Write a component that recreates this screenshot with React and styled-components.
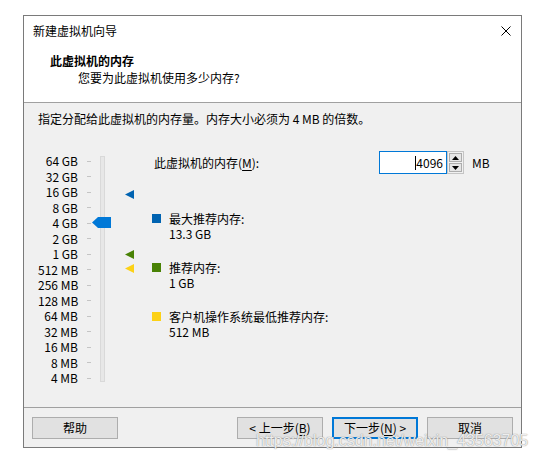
import React from "react";
import styled, { createGlobalStyle } from "styled-components";

const Global = createGlobalStyle`
  html, body { margin: 0; padding: 0; background: #ffffff; }
  body {
    font-family: "Noto Sans CJK SC", "Noto Sans", sans-serif;
    font-size: 12px;
    color: #000;
  }
`;

const ROW = 15.5;

const Page = styled.div`
  position: relative;
  width: 538px;
  height: 460px;
  box-sizing: border-box;
  padding: 15px 0 0 23px;
`;

const Dialog = styled.div`
  width: 499px;
  height: 433px;
  box-sizing: border-box;
  border: 1px solid #7a7a7a;
  display: flex;
  flex-direction: column;
  background: #f0f0f0;
`;

const TitleBar = styled.div`
  flex: none;
  height: 30px;
  background: #fff;
  display: flex;
  align-items: center;
  justify-content: space-between;
  padding: 0 10px 0 9px;
  line-height: 16px;
`;

const Header = styled.div`
  flex: none;
  height: 57px;
  box-sizing: border-box;
  background: #fff;
  border-bottom: 1px solid #a0a0a0;
  padding: 7px 0 0 26px;
`;

const Heading = styled.div`
  font-weight: 700;
  line-height: 16px;
`;

const SubHeading = styled.div`
  margin-left: 28px;
  line-height: 17px;
`;

const Body = styled.div`
  flex: 1;
  padding: 8px 0 0 14px;
`;

const Instruction = styled.div`
  line-height: 16px;
`;

const ContentRow = styled.div`
  display: flex;
  align-items: flex-start;
  margin-top: 24px;
`;

const Slider = styled.div`
  position: relative;
  flex: none;
  width: 114px;
  display: flex;
  align-items: flex-start;
  margin-top: 2.25px;
`;

const Scale = styled.div`
  display: flex;
  flex-direction: column;
`;

const ScaleRow = styled.div`
  height: ${ROW}px;
  display: flex;
  align-items: center;
`;

const ScaleLabel = styled.span`
  width: 40px;
  text-align: right;
  line-height: ${ROW}px;
  white-space: nowrap;
`;

const Tick = styled.span`
  width: 4px;
  height: 1px;
  margin-left: 9px;
  background: #c4c4c4;
`;

const Track = styled.div`
  width: 5px;
  height: 226px;
  box-sizing: border-box;
  margin: 3px 0 0 9px;
  border: 1px solid #d9d9d9;
  background: #e7e7e7;
`;

const Thumb = styled.svg`
  position: absolute;
  left: 54px;
  top: ${(p) => p.$index * ROW + ROW / 2 - 6}px;
`;

const Marker = styled.svg`
  position: absolute;
  left: 87px;
  top: ${(p) => p.$top}px;
`;

const Panel = styled.div`
  flex: 1;
  display: flex;
  flex-direction: column;
`;

const MemRow = styled.div`
  display: flex;
  align-items: center;
  height: 23px;
`;

const MemLabel = styled.span`
  width: 225px;
  margin-left: 2px;
  line-height: 23px;
`;

const Key = styled.span`
  text-decoration: underline;
  text-underline-offset: 2px;
`;

const Input = styled.div`
  width: 68px;
  height: 23px;
  box-sizing: border-box;
  border: 1px solid #0078d7;
  background: #fff;
  display: flex;
  align-items: center;
  justify-content: flex-end;
  padding-right: 3px;
  line-height: 16px;
`;

const Caret = styled.span`
  width: 1px;
  height: 14px;
  background: #000;
`;

const Spinner = styled.div`
  width: 17px;
  height: 23px;
  box-sizing: border-box;
  border: 1px solid #c4c4c4;
  padding: 1px;
  display: flex;
  flex-direction: column;
  gap: 1px;
`;

const SpinButton = styled.div`
  flex: 1;
  box-sizing: border-box;
  border: 1px solid #adadad;
  background: #e5e5e5;
  display: flex;
  align-items: center;
  justify-content: center;
`;

const Unit = styled.span`
  margin-left: 8px;
  line-height: 23px;
`;

const Legend = styled.div`
  display: flex;
  flex-direction: column;
  gap: 19px;
  margin-top: 36.5px;
`;

const LegendItem = styled.div`
  display: flex;
  flex-direction: column;
`;

const LegendTitle = styled.div`
  display: flex;
  align-items: center;
  line-height: 15px;
`;

const Swatch = styled.span`
  width: 9px;
  height: 9px;
  margin-right: 8px;
  background: ${(p) => p.$color};
`;

const LegendValue = styled.div`
  margin-left: 17px;
  line-height: 15px;
`;

const Footer = styled.div`
  flex: none;
  height: 40px;
  box-sizing: border-box;
  border-top: 1px solid #a0a0a0;
  padding: 9px 8px 0 8px;
  display: flex;
  align-items: flex-start;
`;

const ButtonGroup = styled.div`
  margin-left: auto;
  display: flex;
  gap: 9px;
`;

const Button = styled.button`
  width: 86px;
  height: 22px;
  box-sizing: border-box;
  padding: 0;
  margin: 0;
  font-family: inherit;
  font-size: 12px;
  color: #000;
  line-height: 16px;
  background: #e1e1e1;
  border: ${(p) => (p.$primary ? "2px solid #0078d7" : "1px solid #adadad")};
`;

const Watermark = styled.div`
  position: absolute;
  left: 256px;
  top: 432px;
  font-family: "Liberation Sans", Arial, sans-serif;
  font-size: 16px;
  line-height: 18px;
  color: rgba(255, 255, 255, 0.85);
  text-shadow: 0 0 1px rgba(120, 120, 120, 0.7), 0 0 1px rgba(120, 120, 120, 0.5);
  white-space: nowrap;
  pointer-events: none;
`;

const labels = [
  "64 GB", "32 GB", "16 GB", "8 GB", "4 GB", "2 GB", "1 GB",
  "512 MB", "256 MB", "128 MB", "64 MB", "32 MB", "16 MB", "8 MB", "4 MB",
];

const markers = [
  { color: "#0063b1", top: 37 },
  { color: "#498205", top: 97 },
  { color: "#fcd116", top: 111 },
];

const legend = [
  { color: "#0063b1", title: "最大推荐内存:", value: "13.3 GB" },
  { color: "#498205", title: "推荐内存:", value: "1 GB" },
  { color: "#fcd116", title: "客户机操作系统最低推荐内存:", value: "512 MB" },
];

export default function App() {
  return (
    <Page>
      <Global />
      <Dialog>
        <TitleBar>
          <span>新建虚拟机向导</span>
          <svg width="10" height="10" viewBox="0 0 10 10">
            <path d="M0.5 0.5 L9.5 9.5 M9.5 0.5 L0.5 9.5" stroke="#000" strokeWidth="1" fill="none" />
          </svg>
        </TitleBar>
        <Header>
          <Heading>此虚拟机的内存</Heading>
          <SubHeading>您要为此虚拟机使用多少内存?</SubHeading>
        </Header>
        <Body>
          <Instruction>指定分配给此虚拟机的内存量。内存大小必须为 4 MB 的倍数。</Instruction>
          <ContentRow>
            <Slider>
              <Scale>
                {labels.map((l) => (
                  <ScaleRow key={l}>
                    <ScaleLabel>{l}</ScaleLabel>
                    <Tick />
                  </ScaleRow>
                ))}
              </Scale>
              <Track />
              <Thumb $index={4} width="19" height="11" viewBox="0 0 19 11">
                <polygon points="0,5.5 6,0 19,0 19,11 6,11" fill="#0078d7" />
              </Thumb>
              {markers.map((m) => (
                <Marker key={m.color} $top={m.top} width="9" height="9" viewBox="0 0 9 9">
                  <polygon points="9,0 9,9 0,4.5" fill={m.color} />
                </Marker>
              ))}
            </Slider>
            <Panel>
              <MemRow>
                <MemLabel>
                  此虚拟机的内存(<Key>M</Key>):
                </MemLabel>
                <Input>
                  <Caret />
                  <span>4096</span>
                </Input>
                <Spinner>
                  <SpinButton>
                    <svg width="7" height="4" viewBox="0 0 7 4">
                      <polygon points="0,4 7,4 3.5,0" fill="#000" />
                    </svg>
                  </SpinButton>
                  <SpinButton>
                    <svg width="7" height="4" viewBox="0 0 7 4">
                      <polygon points="0,0 7,0 3.5,4" fill="#000" />
                    </svg>
                  </SpinButton>
                </Spinner>
                <Unit>MB</Unit>
              </MemRow>
              <Legend>
                {legend.map((item) => (
                  <LegendItem key={item.title}>
                    <LegendTitle>
                      <Swatch $color={item.color} />
                      <span>{item.title}</span>
                    </LegendTitle>
                    <LegendValue>{item.value}</LegendValue>
                  </LegendItem>
                ))}
              </Legend>
            </Panel>
          </ContentRow>
        </Body>
        <Footer>
          <Button>帮助</Button>
          <ButtonGroup>
            <Button>
              &lt; 上一步(<Key>B</Key>)
            </Button>
            <Button $primary>
              下一步(<Key>N</Key>) &gt;
            </Button>
            <Button>取消</Button>
          </ButtonGroup>
        </Footer>
      </Dialog>
      <Watermark>https://blog.csdn.net/weixin_43563705</Watermark>
    </Page>
  );
}
